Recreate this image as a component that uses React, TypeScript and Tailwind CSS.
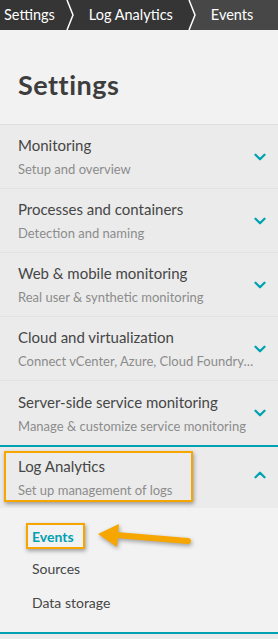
import { ChevronDown, ChevronUp } from "lucide-react";

const SECTIONS = [
  { title: "Monitoring", sub: "Setup and overview" },
  { title: "Processes and containers", sub: "Detection and naming" },
  { title: "Web & mobile monitoring", sub: "Real user & synthetic monitoring" },
  { title: "Cloud and virtualization", sub: "Connect vCenter, Azure, Cloud Foundry, Kubernetes" },
  { title: "Server-side service monitoring", sub: "Manage & customize service monitoring" },
];

function Crumb({ label, next, gap }: { label: string; next: string; gap: string }) {
  return (
    <div className="flex h-full items-center">
      <span className="whitespace-nowrap">{label}</span>
      <svg width="10" height="30" viewBox="0 0 10 30" className={`${gap} shrink-0`}>
        <polygon points="2,0 10,0 10,30 2,30 8,15" fill={next} />
        <polyline points="2,0 8,15 2,30" fill="none" stroke="#ffffff" strokeWidth="1.5" />
      </svg>
    </div>
  );
}

export default function App() {
  return (
    <div
      className="h-[639px] w-[278px] overflow-hidden bg-[#ebebeb] text-[#454646]"
      style={{ fontFamily: 'Lato, "Noto Sans", sans-serif' }}
    >
      <div className="flex h-[30px] bg-[#353535] text-[14.5px] text-white">
        <div className="flex h-full pl-[4px]">
          <Crumb label="Settings" next="#353535" gap="ml-[10px]" />
        </div>
        <div className="flex h-full pl-[14px]">
          <Crumb label="Log Analytics" next="#474747" gap="ml-[14px]" />
        </div>
        <div className="flex h-full flex-1 items-center bg-[#474747] pl-[14px]">Events</div>
      </div>

      <div className="h-[94px] bg-[#f2f2f2] px-[18px] pt-[38px]">
        <h1 className="text-[27px] font-bold leading-[34px] tracking-[0.5px] text-[#3d3d3d]">Settings</h1>
      </div>

      <div className="border-t border-[#dedede]">
        {SECTIONS.map((s, i) => (
          <div
            key={s.title}
            className={`flex h-[64px] items-center pl-[18px] pr-[9px] ${i < SECTIONS.length - 1 ? "border-b border-[#e2e2e2]" : ""}`}
          >
            <div className="min-w-0 flex-1">
              <div className="truncate text-[15px] leading-[20px]">{s.title}</div>
              <div className="mt-[5px] truncate text-[13px] leading-[18px] text-[#8c8c8c]">{s.sub}</div>
            </div>
            <ChevronDown className="-ml-[4px] h-[18px] w-[18px] shrink-0 text-[#00a1b2]" strokeWidth={3} />
          </div>
        ))}
      </div>

      <div className="border-t-2 border-[#00a1b2]">
        <div className="relative flex h-[61px] items-center pl-[18px] pr-[9px]">
          <div className="min-w-0 flex-1">
            <div className="truncate text-[15px] leading-[20px]">Log Analytics</div>
            <div className="mt-[5px] truncate text-[13px] leading-[18px] text-[#8c8c8c]">Set up management of logs</div>
          </div>
          <ChevronUp className="-ml-[4px] mt-[-6px] h-[18px] w-[18px] shrink-0 text-[#00a1b2]" strokeWidth={3} />
          <div className="absolute left-[4px] top-[4px] h-[51px] w-[189px] border-2 border-[#f7a600] shadow-[1px_2px_4px_rgba(0,0,0,0.35)]" />
        </div>

        <div className="relative flex h-[124px] flex-col bg-[#f2f2f2] pl-[32px] pt-[19px] text-[14px]">
          <div className="h-[32px] font-bold leading-[20px] text-[#00a1b2]">Events</div>
          <div className="h-[34px] leading-[20px]">Sources</div>
          <div className="leading-[20px]">Data storage</div>
          <div className="absolute left-[26px] top-[15px] h-[26px] w-[59px] border-2 border-[#f7a600] shadow-[1px_2px_4px_rgba(0,0,0,0.35)]" />
          <svg width="100" height="30" viewBox="0 0 100 30" className="absolute left-[96px] top-[13px] overflow-visible">
            <g style={{ filter: "drop-shadow(1px 2px 2px rgba(0,0,0,0.35))" }}>
              <line x1="20" y1="14" x2="92" y2="20" stroke="#f7a600" strokeWidth="6" strokeLinecap="round" />
              <polygon points="2,13 23,3 21,26" fill="#f7a600" />
            </g>
          </svg>
        </div>
      </div>

      <div className="h-[2px] bg-[#00a1b2]" />
    </div>
  );
}
